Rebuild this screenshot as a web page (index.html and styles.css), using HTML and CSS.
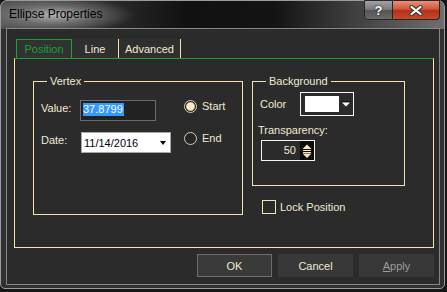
FILE: index.html
```html
<!DOCTYPE html>
<html lang="en">
<head>
    <meta charset="UTF-8">
    <title>Ellipse Properties</title>
    <link rel="stylesheet" href="styles.css">
</head>
<body>
    <div class="window">
        <div class="titlebar">
            <span class="title">Ellipse Properties</span>
            <div class="caption">
                <div class="cap-btn help">?</div>
                <div class="cap-btn close">
                    <svg width="14" height="11" viewBox="0 0 14 11">
                        <path d="M2.5 2 L11.5 9 M11.5 2 L2.5 9" stroke="#3c3c3c" stroke-width="4.2" stroke-linecap="round"/>
                        <path d="M2.5 2 L11.5 9 M11.5 2 L2.5 9" stroke="#ffffff" stroke-width="2.2" stroke-linecap="round"/>
                    </svg>
                </div>
            </div>
        </div>
        <div class="client">
            <div class="tabs">
                <div class="tab active">Position</div>
                <div class="tab line">Line</div>
                <div class="tab advanced">Advanced</div>
            </div>
            <div class="panel">
                <fieldset class="group vertex">
                    <legend>Vertex</legend>
                    <div class="vertex-grid">
                        <span class="lbl">Value:</span>
                        <div class="textbox"><span class="selected">37.8799</span></div>
                        <span class="radio"><span class="dot on"></span>Start</span>
                        <span class="lbl">Date:</span>
                        <div class="datebox">11/14/2016<span class="down"></span></div>
                        <span class="radio"><span class="dot"></span>End</span>
                    </div>
                </fieldset>
                <div class="side">
                    <fieldset class="group background">
                        <legend>Background</legend>
                        <div class="color-row">
                            <span class="lbl">Color</span>
                            <div class="colorbox">
                                <span class="swatch"></span>
                                <svg width="10" height="6" viewBox="0 0 10 6">
                                    <line x1="0" y1="0.5" x2="10" y2="0.5" stroke="#111"/>
                                    <polygon points="1,1.5 9,1.5 5,5.5" fill="#ffffff"/>
                                </svg>
                            </div>
                        </div>
                        <span class="lbl trans">Transparency:</span>
                        <div class="spinner">
                            <span class="num">50</span>
                            <div class="spin">
                                <svg width="14" height="19" viewBox="0 0 14 19">
                                    <polygon points="2.5,8 11.5,8 7,3.5" fill="#f6e6bc"/>
                                    <line x1="3" y1="9.5" x2="11" y2="9.5" stroke="#f6e6bc"/>
                                    <line x1="3" y1="11.5" x2="11" y2="11.5" stroke="#f6e6bc"/>
                                    <polygon points="2.5,12.5 11.5,12.5 7,17" fill="#f6e6bc"/>
                                </svg>
                            </div>
                        </div>
                    </fieldset>
                    <div class="check"><span class="box"></span>Lock Position</div>
                </div>
            </div>
            <div class="buttons">
                <div class="btn default">OK</div>
                <div class="btn">Cancel</div>
                <div class="btn disabled"><u>A</u>pply</div>
            </div>
        </div>
    </div>
</body>
</html>
```

FILE: styles.css
```css
* {
    box-sizing: border-box;
}
body {
    margin: 0;
    background: #161616;
    font-family: 'Liberation Sans', Arial, sans-serif;
    font-size: 11px;
    color: #f1ead3;
}
.window {
    width: 445px;
    height: 289px;
    border: 1px solid #9c9c9c;
    border-radius: 7px 7px 5px 5px;
    padding: 0 4px 3px 5px;
    background:
        radial-gradient(ellipse 80px 18px at 54px 14px, rgba(190,190,190,0.9), rgba(150,150,150,0.5) 50%, rgba(120,120,120,0) 100%),
        linear-gradient(90deg, #505050 0%, #2e2e2e 22%, #111 42%, #141414 62%, #4a4a4a 84%, #6e6e6e 100%) top / 100% 28px no-repeat,
        #303030;
}
.titlebar {
    height: 27px;
    display: flex;
    justify-content: space-between;
    align-items: flex-start;
}
.title {
    margin: 6px 0 0 3px;
    font-size: 12px;
    color: #000;
}
.caption {
    display: flex;
    margin-top: -1px;
}
.cap-btn {
    height: 20px;
    border: 1px solid #262626;
    display: flex;
    justify-content: center;
    align-items: center;
}
.help {
    width: 29px;
    border-radius: 0 0 0 4px;
    background: linear-gradient(#a2a2a2, #777 48%, #555 52%, #6a6a6a);
    color: #fff;
    font-weight: bold;
    font-size: 13px;
    text-shadow: 0 0 2px #222, 0 0 1px #222;
}
.close {
    width: 47px;
    border-left: none;
    border-radius: 0 0 4px 0;
    background: linear-gradient(#e8907c, #d2553a 45%, #b4311a 52%, #c9472c);
}
.client {
    height: 257px;
    border: 1px solid #868686;
    background: #2b2b2b;
    padding: 10px 5px 0 7px;
}
.tabs {
    display: flex;
    height: 19px;
    margin-left: 2px;
}
.tab {
    display: flex;
    justify-content: center;
    align-items: center;
    background: #2f2f2f;
    color: #f1ead3;
    border-right: 1px solid #f6e4b0;
}
.tab.active {
    width: 56px;
    border: 1px solid #16a236;
    border-bottom: none;
    background: #323232;
    color: #16a236;
}
.tab.line {
    width: 47px;
}
.tab.advanced {
    width: 62px;
}
.panel {
    width: 420px;
    height: 190px;
    border: 1px solid #f6e4b0;
    border-top-color: #16a236;
    display: flex;
    gap: 9px;
    padding: 16px 0 0 18px;
}
.group {
    margin: 0;
    padding: 0 0 0 7px;
    border: 1px solid #f6e4b0;
    min-width: 0;
}
.group legend {
    margin-left: 6px;
    padding: 0 3px;
    line-height: 13px;
}
.vertex {
    width: 210px;
    height: 140px;
    padding-top: 12px;
}
.vertex-grid {
    display: grid;
    grid-template-columns: 39px 104px auto;
    grid-auto-rows: 21px;
    row-gap: 11px;
}
.lbl {
    line-height: 13px;
    padding-top: 2px;
}
.textbox {
    width: 76px;
    height: 21px;
    border: 1px solid #6c6c6c;
    background: #222;
    padding: 2px 0 0 2px;
}
.selected {
    display: inline-block;
    background: #3399ff;
    color: #fff;
    line-height: 13px;
    padding-right: 1px;
}
.datebox {
    width: 90px;
    height: 21px;
    margin-left: 1px;
    background: #fff;
    border: 1px solid #a8a8a8;
    color: #000010;
    display: flex;
    align-items: center;
    justify-content: space-between;
    padding: 0 4px 0 2px;
}
.down {
    border-left: 3.5px solid transparent;
    border-right: 3.5px solid transparent;
    border-top: 4px solid #000;
}
.radio {
    display: flex;
    align-items: center;
    gap: 5px;
    line-height: 13px;
    height: 13px;
}
.dot {
    width: 13px;
    height: 13px;
    border-radius: 50%;
    border: 1px solid #d6ceb6;
    background: #262626;
}
.dot.on {
    background: radial-gradient(circle, #fbecc4 0 3.5px, #c9bd98 4px, #262626 5px);
}
.side {
    display: flex;
    flex-direction: column;
}
.background {
    width: 153px;
    height: 111px;
    padding-top: 4px;
}
.color-row {
    display: flex;
    align-items: center;
    gap: 14px;
}
.color-row .lbl {
    padding-top: 0;
}
.colorbox {
    width: 54px;
    height: 24px;
    border: 1px solid #f4f4f4;
    display: flex;
    align-items: center;
    padding-left: 4px;
    gap: 2px;
}
.swatch {
    width: 34px;
    height: 16px;
    background: #fff;
}
.trans {
    display: block;
    margin: 8px 0 0 -2px;
    padding-top: 0;
}
.spinner {
    width: 54px;
    height: 21px;
    margin: 3px 0 0 1px;
    border: 1px solid #f4f4f4;
    display: flex;
    justify-content: flex-end;
}
.num {
    line-height: 19px;
    margin-right: 4px;
}
.spin {
    width: 14px;
    background: #0c0c0c;
}
.spin svg {
    display: block;
}
.check {
    display: flex;
    align-items: center;
    gap: 4px;
    margin: 14px 0 0 10px;
}
.box {
    width: 14px;
    height: 14px;
    border: 1px solid #f6e4b0;
}
.buttons {
    display: flex;
    justify-content: flex-end;
    gap: 6px;
    margin-top: 6px;
}
.btn {
    width: 75px;
    height: 23px;
    display: flex;
    justify-content: center;
    align-items: center;
    background: #383838;
    border: 1px solid #383838;
    color: #f1ead3;
}
.btn.default {
    border-color: #6e6e6e;
    background: #3a3a3a;
}
.btn.disabled {
    color: #9c9c9c;
}
```
